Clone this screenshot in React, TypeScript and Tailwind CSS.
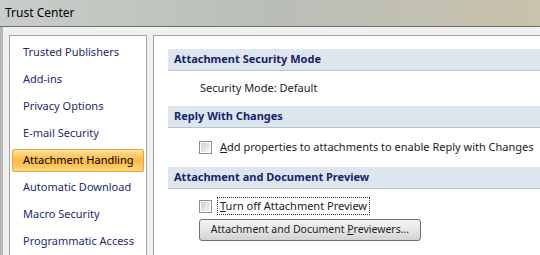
import React from "react";

const navItems = [
  "Trusted Publishers",
  "Add-ins",
  "Privacy Options",
  "E-mail Security",
  "Attachment Handling",
  "Automatic Download",
  "Macro Security",
  "Programmatic Access",
];

function Checkbox() {
  return (
    <div className="h-[13px] w-[13px] shrink-0 border border-[#8e8f8f] bg-white p-[1px]">
      <div className="h-full w-full bg-gradient-to-br from-[#cbcfd5] to-[#f6f6f6]"></div>
    </div>
  );
}

function SectionHeader(props: { children: React.ReactNode }) {
  return (
    <div className="flex h-[22px] shrink-0 items-center whitespace-nowrap border-b border-[#b9c3cc] bg-[#dde6ef] pl-[6px] font-bold text-[#16236a]">
      {props.children}
    </div>
  );
}

export default function App() {
  return (
    <div className="flex h-[255px] w-[540px] flex-col overflow-hidden bg-[#f0f0f0] font-['Noto_Sans',sans-serif] text-[11px] text-[#1c1c1c]">
      <div className="flex h-[26px] shrink-0 items-center bg-gradient-to-r from-[#c9cdc9] via-[#b9beb8] to-[#c9c2ac] pl-[5px] text-[12px] text-black">
        Trust Center
      </div>
      <div className="h-[1px] shrink-0 bg-[#6d6f6a]"></div>
      <div className="flex flex-1 border-l-[3px] border-[#b5b8b5] pl-[6px] pt-[8px]">
        <div className="flex w-[138px] shrink-0 flex-col border border-[#a3a3a3] bg-white pt-[3px]">
          {navItems.map((item) => {
            const selected = item === "Attachment Handling";
            return (
              <div key={item} className="flex h-[27px] shrink-0 items-center whitespace-nowrap px-[2px]">
                {selected ? (
                  <div className="flex h-[23px] w-full items-center rounded-[2px] border border-[#e3a644] bg-gradient-to-b from-[#ffe29a] via-[#ffb73c] to-[#ffd77a] pl-[10px] text-black">
                    {item}
                  </div>
                ) : (
                  <div className="pl-[11px] text-[#1b2a6e]">{item}</div>
                )}
              </div>
            );
          })}
        </div>
        <div className="ml-[6px] flex min-w-0 flex-1 flex-col border border-r-0 border-[#a3a3a3] bg-white pl-[14px] pt-[13px]">
          <SectionHeader>Attachment Security Mode</SectionHeader>
          <div className="flex h-[35px] shrink-0 items-center pl-[32px]">Security Mode: Default</div>
          <SectionHeader>Reply With Changes</SectionHeader>
          <div className="flex h-[39px] shrink-0 items-center gap-[8px] whitespace-nowrap pl-[31px]">
            <Checkbox />
            <span>
              <span className="underline">A</span>dd properties to attachments to enable Reply with Changes
            </span>
          </div>
          <SectionHeader>Attachment and Document Preview</SectionHeader>
          <div className="flex flex-col items-start pl-[31px] pt-[8px]">
            <div className="flex h-[18px] items-center gap-[5px] whitespace-nowrap">
              <Checkbox />
              <span className="border border-dotted border-[#333] px-[2px] leading-[16px]">
                <span className="underline">T</span>urn off Attachment Preview
              </span>
            </div>
            <div className="mt-[4px] flex h-[22px] w-[222px] items-center justify-center whitespace-nowrap rounded-[3px] border border-[#707070] bg-gradient-to-b from-[#f3f3f3] via-[#e6e6e6] to-[#d2d2d2] text-[10.5px] text-[#1c1c1c]">
              Attachment and Document&nbsp;<span className="underline">P</span>reviewers...
            </div>
          </div>
        </div>
      </div>
    </div>
  );
}
